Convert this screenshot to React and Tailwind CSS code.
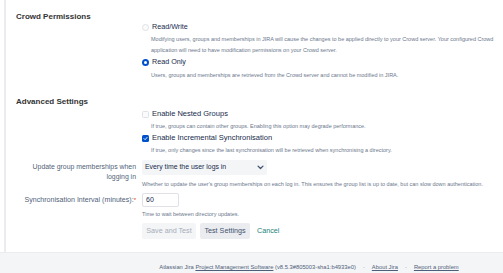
import React from "react";

const desc = "text-[5.5px] leading-[11px] text-[#6b778c]";

function Radio({ checked, label }) {
   return (
      <div className="flex items-center h-[12px] gap-[3px]">
         {checked ? (
            <span className="w-[7px] h-[7px] rounded-full bg-[#0052cc] flex items-center justify-center">
               <span className="w-[3px] h-[3px] rounded-full bg-white"></span>
            </span>
         ) : (
            <span className="w-[7px] h-[7px] rounded-full border border-[#dfe1e6] bg-[#fafbfc]"></span>
         )}
         <span className="text-[7.2px] text-[#172b4d]">{label}</span>
      </div>
   );
}

function Check({ checked, label }) {
   return (
      <div className="flex items-center h-[12px] gap-[3px]">
         {checked ? (
            <span className="w-[7px] h-[7px] rounded-[1.5px] bg-[#0052cc] flex items-center justify-center">
               <svg width="5" height="5" viewBox="0 0 10 10">
                  <path d="M2 5.2 L4.2 7.4 L8.2 2.8" fill="none" stroke="white" strokeWidth="1.8" strokeLinecap="round" strokeLinejoin="round" />
               </svg>
            </span>
         ) : (
            <span className="w-[7px] h-[7px] rounded-[1.5px] border border-[#dfe1e6] bg-[#fafbfc]"></span>
         )}
         <span className="text-[7.5px] text-[#172b4d]">{label}</span>
      </div>
   );
}

export default function App() {
   return (
      <div className="w-[503px] h-[273px] bg-white flex flex-col overflow-hidden" style={{ fontFamily: '"Liberation Sans", Arial, sans-serif' }}>
         <div className="flex-1 ml-[4px] border-l-2 border-[#ebecf0] pl-[10px] pt-[12px]">
            {/* CROWD PERMISSIONS */}
            <div className="text-[8px] font-bold text-[#333] leading-[10px]">Crowd Permissions</div>
            <div className="ml-[126px] mt-[-1px]">
               <Radio label="Read/Write" />
               <div className={`${desc} ml-[9px] mt-[1px]`}>
                  Modifying users, groups and memberships in JIRA will cause the changes to be applied directly to your Crowd server. Your configured Crowd
                  <br />
                  application will need to have modification permissions on your Crowd server.
               </div>
               <Radio checked label="Read Only" />
               <div className={`${desc} ml-[9px] mt-[2px]`}>Users, groups and memberships are retrieved from the Crowd server and cannot be modified in JIRA.</div>
            </div>

            {/* ADVANCED SETTINGS */}
            <div className="text-[8px] font-bold text-[#333] leading-[10px] mt-[16px]">Advanced Settings</div>
            <div className="ml-[126px] mt-[1px]">
               <Check label="Enable Nested Groups" />
               <div className={`${desc} ml-[9px] mt-[1px]`}>If true, groups can contain other groups. Enabling this option may degrade performance.</div>
               <Check checked label="Enable Incremental Synchronisation" />
               <div className={`${desc} ml-[9px] mt-[1px]`}>If true, only changes since the last synchronisation will be retrieved when synchronising a directory.</div>
            </div>

            <div className="flex mt-[4px]">
               <div className="w-[120px] text-right text-[6.9px] leading-[10px] text-[#505f79] pt-[2px]">
                  Update group memberships when
                  <br />
                  logging in
               </div>
               <div className="ml-[6px]">
                  <div className="w-[125px] h-[15px] bg-[#f4f5f7] rounded-[2px] flex items-center justify-between px-[3px]">
                     <span className="text-[6.9px] text-[#172b4d]">Every time the user logs in</span>
                     <svg width="7" height="5" viewBox="0 0 10 7">
                        <path d="M1.5 1.5 L5 5 L8.5 1.5" fill="none" stroke="#42526e" strokeWidth="1.8" strokeLinecap="round" strokeLinejoin="round" />
                     </svg>
                  </div>
                  <div className={`${desc} mt-[4px]`}>Whether to update the user's group memberships on each log in. This ensures the group list is up to date, but can slow down authentication.</div>
               </div>
            </div>

            <div className="flex mt-[3px]">
               <div className="w-[120px] text-right text-[7.1px] leading-[14px] text-[#505f79] whitespace-nowrap">
                  Synchronisation Interval (minutes):<span className="text-[#de350b] align-top text-[6px]">*</span>
               </div>
               <div className="ml-[6px]">
                  <div className="w-[37px] h-[14px] border border-[#dfe1e6] rounded-[2px] flex items-center px-[3px] text-[7px] text-[#172b4d]">60</div>
                  <div className={`${desc} mt-[2px]`}>Time to wait between directory updates.</div>
                  <div className="flex items-center gap-[4px] mt-[3px]">
                     <div className="h-[16px] w-[54px] rounded-[2px] bg-[#f4f5f7] text-[#a5adba] text-[7.2px] flex items-center justify-center">Save and Test</div>
                     <div className="h-[16px] w-[50px] rounded-[2px] bg-[#ebecf0] text-[#42526e] text-[7.2px] flex items-center justify-center">Test Settings</div>
                     <span className="text-[7.2px] text-[#1b7f79] ml-[3px]">Cancel</span>
                  </div>
               </div>
            </div>
         </div>

         {/* FOOTER */}
         <div className="h-[21px] bg-[#f4f5f7] border-t border-[#ebecf0] flex items-end justify-center pb-[1px] pl-[115px] text-[5.8px] text-[#505f79]">
            <span>
               Atlassian Jira <span className="underline">Project Management Software</span> (v8.5.3#805003-sha1:b4933e0)
            </span>
            <span className="mx-[7px]">·</span>
            <span className="underline">About Jira</span>
            <span className="mx-[7px]">·</span>
            <span className="underline">Report a problem</span>
         </div>
      </div>
   );
}
